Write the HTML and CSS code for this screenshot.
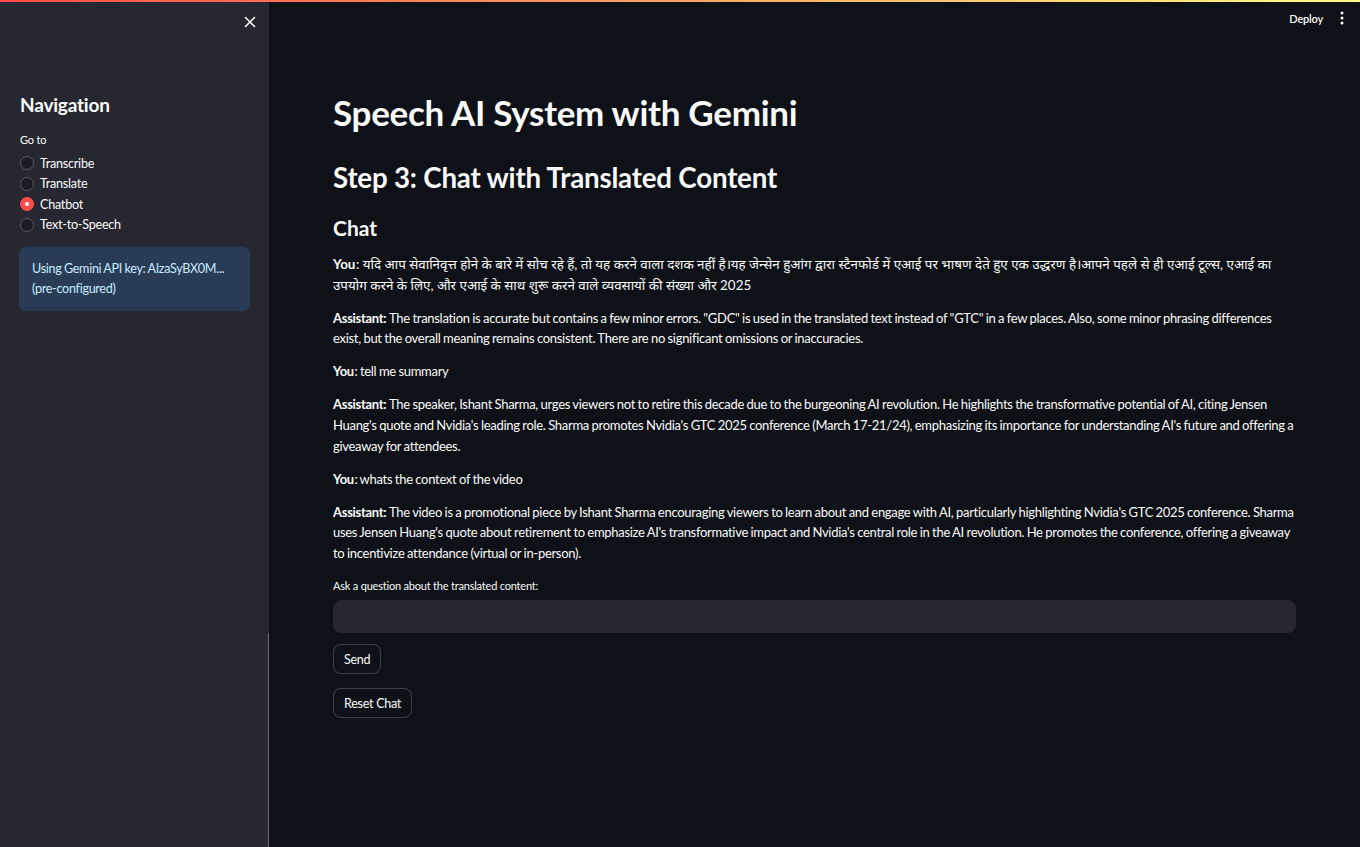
FILE: index.html
```html
<!DOCTYPE html>
<html lang="en">
<head>
<meta charset="utf-8">
<title>Speech AI System with Gemini</title>
<link rel="stylesheet" href="styles.css">
</head>
<body>
<div class="decoration"></div>
<div class="app">
  <aside class="sidebar">
    <div class="sidebar-top">
      <button class="close-btn" aria-label="Close sidebar">
        <svg width="12" height="12" viewBox="0 0 12 12"><path d="M1.5 1.5 L10.5 10.5 M10.5 1.5 L1.5 10.5" stroke="#fafafa" stroke-width="1.6" stroke-linecap="round"/></svg>
      </button>
    </div>
    <div class="sidebar-content">
      <h2 class="nav-title">Navigation</h2>
      <div class="radio-label">Go to</div>
      <div class="radio-group">
        <label class="radio"><span class="dot"></span>Transcribe</label>
        <label class="radio"><span class="dot"></span>Translate</label>
        <label class="radio checked"><span class="dot"></span>Chatbot</label>
        <label class="radio"><span class="dot"></span>Text-to-Speech</label>
      </div>
      <div class="info-box">Using Gemini API key: AIzaSyBX0M... (pre-configured)</div>
    </div>
  </aside>
  <main class="main">
    <header class="toolbar">
      <span class="deploy">Deploy</span>
      <span class="kebab">
        <svg width="4" height="14" viewBox="0 0 4 14"><circle cx="2" cy="2" r="1.5" fill="#fafafa"/><circle cx="2" cy="7" r="1.5" fill="#fafafa"/><circle cx="2" cy="12" r="1.5" fill="#fafafa"/></svg>
      </span>
    </header>
    <section class="content">
      <h1 class="title">Speech AI System with Gemini</h1>
      <h2 class="step">Step 3: Chat with Translated Content</h2>
      <h3 class="chat-title">Chat</h3>
      <div class="messages">
        <p class="msg hindi"><span class="who">You</span>: यदि आप सेवानिवृत्त होने के बारे में सोच रहे हैं, तो यह करने वाला दशक नहीं है।यह जेन्सेन हुआंग द्वारा स्टैनफोर्ड में एआई पर भाषण देते हुए एक उद्धरण है।आपने पहले से ही एआई टूल्स, एआई का उपयोग करने के लिए, और एआई के साथ शुरू करने वाले व्यवसायों की संख्या और 2025</p>
        <p class="msg"><span class="who">Assistant:</span> The translation is accurate but contains a few minor errors. "GDC" is used in the translated text instead of "GTC" in a few places. Also, some minor phrasing differences exist, but the overall meaning remains consistent. There are no significant omissions or inaccuracies.</p>
        <p class="msg"><span class="who">You</span>: tell me summary</p>
        <p class="msg"><span class="who">Assistant:</span> The speaker, Ishant Sharma, urges viewers not to retire this decade due to the burgeoning AI revolution. He highlights the transformative potential of AI, citing Jensen Huang's quote and Nvidia's leading role. Sharma promotes Nvidia's GTC 2025 conference (March 17-21/24), emphasizing its importance for understanding AI's future and offering a giveaway for attendees.</p>
        <p class="msg"><span class="who">You</span>: whats the context of the video</p>
        <p class="msg"><span class="who">Assistant:</span> The video is a promotional piece by Ishant Sharma encouraging viewers to learn about and engage with AI, particularly highlighting Nvidia's GTC 2025 conference. Sharma uses Jensen Huang's quote about retirement to emphasize AI's transformative impact and Nvidia's central role in the AI revolution. He promotes the conference, offering a giveaway to incentivize attendance (virtual or in-person).</p>
      </div>
      <label class="input-label" for="q">Ask a question about the translated content:</label>
      <input id="q" class="text-input" type="text">
      <div class="buttons">
        <button class="btn">Send</button>
        <button class="btn">Reset Chat</button>
      </div>
    </section>
  </main>
</div>
</body>
</html>
```
FILE: styles.css
```css
* { box-sizing: border-box; }
html, body { margin: 0; padding: 0; height: 100%; }
body {
  background: #0e1117;
  color: #fafafa;
  font-family: "Lato", "Noto Sans Devanagari", "Lohit Devanagari", "FreeSans", sans-serif;
  overflow: hidden;
}
.decoration {
  position: fixed; top: 0; left: 0; right: 0; height: 2px;
  background: linear-gradient(90deg, #ff4b4b, #fffd80);
  z-index: 10;
}
.app { display: flex; height: 847px; }
.sidebar {
  width: 269px; flex: none;
  background: #262730;
  position: relative;
}
.sidebar::after {
  content: ""; position: absolute; right: 0; top: 633px; bottom: 0;
  width: 1px; background: #6b6c74;
}
.sidebar-top { height: 42px; display: flex; justify-content: flex-end; align-items: center; padding: 2px 12px 0 0; }
.close-btn { background: none; border: 0; padding: 0; width: 14px; height: 14px; display: flex; align-items: center; justify-content: center; }
.sidebar-content { padding: 0 19px 0 19px; }
.nav-title { font-size: 19px; font-weight: 700; margin: 50px 0 0 1px; line-height: 26px; letter-spacing: -0.2px; }
.radio-label { font-size: 11px; margin-top: 14px; line-height: 16px; padding-left: 1px; letter-spacing: -0.2px; }
.radio-group { display: flex; flex-direction: column; margin-top: 5px; }
.radio { display: flex; align-items: center; font-size: 12.6px; height: 20.5px; gap: 6px; letter-spacing: -0.25px; }
.dot {
  width: 14px; height: 14px; border-radius: 50%;
  border: 1px solid #595a64; background: #1b1c23; flex: none;
  margin-left: 1px;
}
.radio.checked .dot { background: #ff4b4b; border-color: #ff4b4b; position: relative; }
.radio.checked .dot::after {
  content: ""; position: absolute; left: 4px; top: 4px; width: 4px; height: 4px;
  border-radius: 50%; background: #fafafa;
}
.info-box {
  margin-top: 12px;
  width: 231px;
  background: #2a3c55;
  color: #c7ebff;
  border-radius: 7px;
  padding: 12px 13px;
  font-size: 12.6px; line-height: 20px; letter-spacing: -0.3px; word-spacing: -0.5px;
}
.main { flex: 1; position: relative; }
.toolbar {
  position: absolute; top: 0; right: 0; height: 36px;
  display: flex; align-items: center; gap: 17px; padding-right: 16px;
}
.deploy { font-size: 11px; font-weight: 600; letter-spacing: -0.2px; }
.kebab { display: flex; }
.content { padding: 92px 64px 0 64px; display: flex; flex-direction: column; align-items: flex-start; }
.title { font-size: 35px; font-weight: 700; line-height: 40px; margin: 0; letter-spacing: -0.3px; }
.step { font-size: 27.7px; font-weight: 700; line-height: 34px; margin: 29px 0 0; letter-spacing: -0.2px; }
.chat-title { font-size: 21px; font-weight: 700; line-height: 28px; margin: 19px 0 0; }
.messages { margin-top: 12px; width: 100%; }
.msg { font-size: 13px; line-height: 20.6px; margin: 0 0 12.5px; letter-spacing: -0.29px; word-spacing: -0.5px; }
.msg.hindi { font-size: 13.4px; letter-spacing: 0; word-spacing: 0; }
.who { font-weight: 700; margin-right: 0.5px; }
.input-label { font-size: 11px; line-height: 14px; margin-top: 3px; letter-spacing: -0.2px; }
.text-input {
  width: 100%; height: 33px; margin-top: 7px;
  background: #262730; border: 1px solid #262730; border-radius: 8px;
  color: #fafafa; outline: none;
}
.buttons { display: flex; flex-direction: column; align-items: flex-start; gap: 14px; margin-top: 11px; }
.btn {
  background: #0e1117; color: #fafafa;
  border: 1px solid rgba(250,250,250,0.2); border-radius: 8px;
  font-family: inherit; font-size: 12.6px; letter-spacing: -0.3px; height: 30px; padding: 0 10px;
}
```
